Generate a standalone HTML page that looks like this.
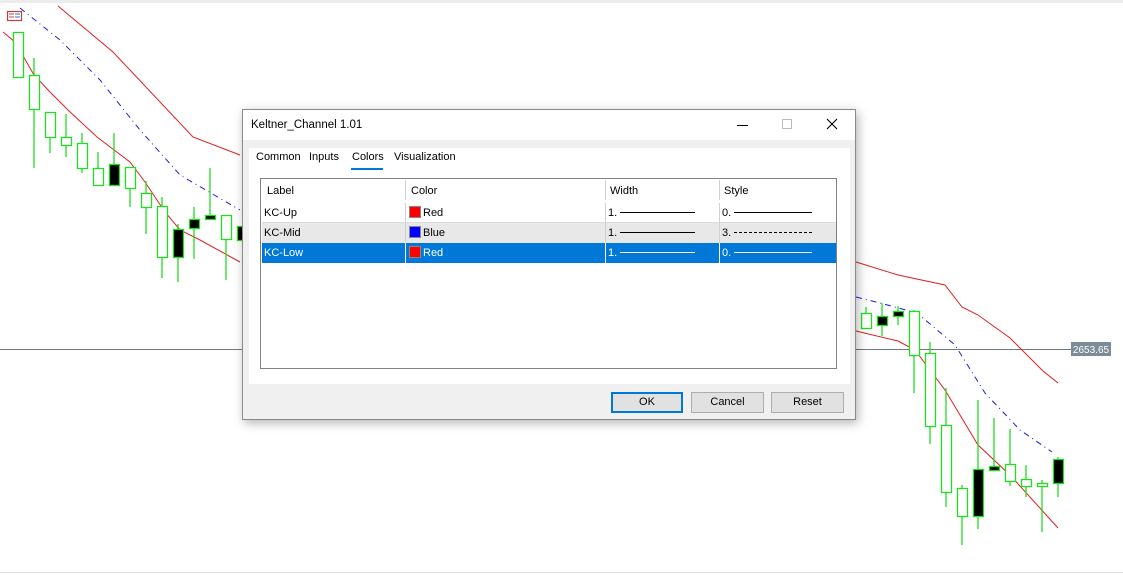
<!DOCTYPE html>
<html><head><meta charset="utf-8"><style>
*{margin:0;padding:0;box-sizing:border-box}
body{width:1123px;height:575px;background:#fff;position:relative;overflow:hidden;font-family:"Liberation Sans",sans-serif;font-size:11px;color:#000}
.abs{position:absolute}
.dlg{left:242px;top:109px;width:614px;height:311px;background:#f0f0f0;border:1px solid #8a8a8a;box-shadow:2px 3px 10px rgba(0,0,0,.3)}
.title{position:absolute;left:0;top:0;width:612px;height:30px;background:#fff}
.panel{position:absolute;left:6px;top:38px;width:601px;height:236px;background:#fff}
.tbl{position:absolute;left:17px;top:68px;width:577px;height:191px;border:1px solid #828282;background:#fff}
.row{position:absolute;left:1px;width:574px;height:20px}
.c{position:absolute;top:0;height:20px;line-height:20px;border-right:1px solid #d0d0d0}
.btn{position:absolute;top:282px;height:21px;background:#e1e1e1;border:1px solid #adadad;text-align:center;line-height:19px;font-size:11px}
</style></head><body>
<div class="abs" style="left:0;top:0;width:1123px;height:3px;background:#ececec"></div>
<div class="abs" style="left:0;top:572px;width:1123px;height:1px;background:#ddd"></div>
<svg class="abs" style="left:0;top:0" width="1123" height="575">
<rect x="7.5" y="11.5" width="14" height="9" fill="none" stroke="#c04040" stroke-width="1.2"/>
<line x1="9" y1="14" x2="14" y2="14" stroke="#d04040"/><line x1="9" y1="17" x2="14" y2="17" stroke="#d04040"/>
<line x1="15" y1="14" x2="20" y2="14" stroke="#3070c0"/><line x1="15" y1="17" x2="20" y2="17" stroke="#3070c0"/>
<line x1="0" y1="349.5" x2="1071" y2="349.5" stroke="#707880"/>
<rect x="1071" y="342" width="40" height="14" fill="#7d8b98"/>
<text x="1091" y="353" fill="#fff" font-size="10" text-anchor="middle" font-family="Liberation Sans">2653.65</text>
<g fill="none" stroke="#e02020" stroke-width="1">
<polyline points="58,6 113,52 193,137 240,155"/>
<polyline points="856,262 898,275 945,285 962,307 978,315 1010,338 1043,371 1058,383"/>
<polyline points="3,32 15,42 34,75 50,92 68,110 97,137 130,162 145,182 165,212 180,230 200,240 240,262"/>
<polyline points="856,331 898,341 915,350 945,390 978,445 1010,475 1058,528"/>
</g>
<g fill="none" stroke="#2020d0" stroke-width="1" stroke-dasharray="6,4,1,4">
<polyline points="20,8 60,40 100,80 140,130 180,175 240,210"/>
<polyline points="856,297 880,303 917,313 955,345 985,393 1020,430 1052,452"/>
</g>
<g stroke="#22dd22" stroke-width="1.3">
<line x1="34" y1="58" x2="34" y2="168"/><line x1="50" y1="137" x2="50" y2="153"/><line x1="66" y1="114" x2="66" y2="157"/><line x1="82" y1="133" x2="82" y2="173"/><line x1="98" y1="152" x2="98" y2="185"/><line x1="114" y1="133" x2="114" y2="185"/><line x1="130" y1="188" x2="130" y2="207"/><line x1="146" y1="181" x2="146" y2="234"/><line x1="162" y1="197" x2="162" y2="278"/><line x1="178" y1="224" x2="178" y2="282"/><line x1="194" y1="207" x2="194" y2="259"/><line x1="210" y1="168" x2="210" y2="218"/><line x1="226" y1="239" x2="226" y2="280"/>
<line x1="866" y1="307" x2="866" y2="313"/><line x1="882" y1="303" x2="882" y2="336"/><line x1="898" y1="306" x2="898" y2="325"/><line x1="914" y1="310" x2="914" y2="393"/><line x1="930" y1="342" x2="930" y2="444"/><line x1="946" y1="388" x2="946" y2="507"/><line x1="962" y1="485" x2="962" y2="545"/><line x1="978" y1="400" x2="978" y2="529"/><line x1="994" y1="418" x2="994" y2="470"/><line x1="1010" y1="429" x2="1010" y2="486"/><line x1="1026" y1="465" x2="1026" y2="497"/><line x1="1042" y1="480" x2="1042" y2="532"/><line x1="1058" y1="457" x2="1058" y2="497"/>
</g>
<g stroke="#22dd22" stroke-width="1.3" fill="#fff">
<rect x="13.5" y="32.5" width="10" height="45"/><rect x="29.5" y="75.5" width="10" height="34"/><rect x="45.5" y="112.5" width="10" height="25"/><rect x="61.5" y="137.5" width="10" height="8"/><rect x="77.5" y="143.5" width="10" height="25"/><rect x="93.5" y="168.5" width="10" height="17"/><rect x="125.5" y="167.5" width="10" height="21"/><rect x="141.5" y="193.5" width="10" height="14"/><rect x="157.5" y="206.5" width="10" height="51"/><rect x="221.5" y="215.5" width="10" height="24"/>
<rect x="861.5" y="313.5" width="10" height="15"/><rect x="909.5" y="311.5" width="10" height="44"/><rect x="925.5" y="353.5" width="10" height="73"/><rect x="941.5" y="425.5" width="10" height="67"/><rect x="957.5" y="488.5" width="10" height="28"/><rect x="1005.5" y="464.5" width="10" height="17"/><rect x="1021.5" y="479.5" width="10" height="7"/><rect x="1037.5" y="483.5" width="10" height="3"/>
</g>
<g stroke="#22dd22" stroke-width="1.3" fill="#000">
<rect x="109.5" y="164.5" width="10" height="21"/><rect x="173.5" y="229.5" width="10" height="28"/><rect x="189.5" y="219.5" width="10" height="9"/><rect x="205.5" y="215.5" width="10" height="4"/><rect x="237.5" y="226.5" width="10" height="14"/>
<rect x="877.5" y="316.5" width="10" height="9"/><rect x="893.5" y="311.5" width="10" height="5"/><rect x="973.5" y="469.5" width="10" height="47"/><rect x="989.5" y="466.5" width="10" height="4"/><rect x="1053.5" y="459.5" width="10" height="24"/>
</g>
</svg>
<div class="abs dlg">
 <div class="title">
  <div class="abs" style="left:8px;top:9px;font-size:11.5px">Keltner_Channel 1.01</div>
  <div class="abs" style="left:494px;top:15px;width:11px;height:1px;background:#000"></div>
  <div class="abs" style="left:539px;top:9px;width:10px;height:10px;border:1px solid #bbb"></div>
  <svg class="abs" style="left:583px;top:8px" width="12" height="12"><path d="M1 1L11 11M11 1L1 11" stroke="#000" stroke-width="1.1"/></svg>
 </div>
 <div class="panel"></div>
 <div class="abs" style="left:13px;top:41px">Common</div>
 <div class="abs" style="left:66px;top:41px">Inputs</div>
 <div class="abs" style="left:109px;top:41px">Colors</div>
 <div class="abs" style="left:108px;top:58px;width:32px;height:2px;background:#0078d7"></div>
 <div class="abs" style="left:151px;top:41px">Visualization</div>
 <div class="tbl">
  <div class="row" style="top:1px;height:22px">
   <div class="c" style="left:0;width:144px;padding-left:5px;line-height:22px">Label</div>
   <div class="c" style="left:144px;width:200px;padding-left:5px;line-height:22px">Color</div>
   <div class="c" style="left:344px;width:114px;padding-left:4px;line-height:22px">Width</div>
   <div class="c" style="left:458px;width:116px;padding-left:4px;line-height:22px;border:none">Style</div>
  </div>
  <div class="row" style="top:24px;border-bottom:1px solid #ddd">
   <div class="c" style="left:0;width:144px;padding-left:2px">KC-Up</div>
   <div class="c" style="left:144px;width:200px;padding-left:3px"><span style="display:inline-block;width:12px;height:12px;background:#f00;border:1px solid #888;vertical-align:-2px;margin-right:2px"></span>Red</div>
   <div class="c" style="left:344px;width:114px;padding-left:2px">1. <span style="display:inline-block;width:75px;border-top:1px solid #000;vertical-align:3px"></span></div>
   <div class="c" style="left:458px;width:116px;padding-left:2px;border:none">0. <span style="display:inline-block;width:78px;border-top:1px solid #000;vertical-align:3px"></span></div>
  </div>
  <div class="row" style="top:44px;background:#e8e8e8">
   <div class="c" style="left:0;width:144px;padding-left:2px">KC-Mid</div>
   <div class="c" style="left:144px;width:200px;padding-left:3px"><span style="display:inline-block;width:12px;height:12px;background:#00f;border:1px solid #888;vertical-align:-2px;margin-right:2px"></span>Blue</div>
   <div class="c" style="left:344px;width:114px;padding-left:2px">1. <span style="display:inline-block;width:75px;border-top:1px solid #000;vertical-align:3px"></span></div>
   <div class="c" style="left:458px;width:116px;padding-left:2px;border:none">3. <span style="display:inline-block;width:78px;border-top:1px dashed #000;vertical-align:3px"></span></div>
  </div>
  <div class="row" style="top:64px;background:#0078d7;color:#fff">
   <div class="c" style="left:0;width:144px;padding-left:2px;border-color:#fff">KC-Low</div>
   <div class="c" style="left:144px;width:200px;padding-left:3px;border-color:#fff"><span style="display:inline-block;width:12px;height:12px;background:#f00;border:1px solid #888;vertical-align:-2px;margin-right:2px"></span>Red</div>
   <div class="c" style="left:344px;width:114px;padding-left:2px;border-color:#fff">1. <span style="display:inline-block;width:75px;border-top:1px solid #fff;vertical-align:3px"></span></div>
   <div class="c" style="left:458px;width:116px;padding-left:2px;border:none">0. <span style="display:inline-block;width:78px;border-top:1px solid #fff;vertical-align:3px"></span></div>
  </div>
 </div>
 <div class="btn" style="left:368px;width:72px;border:2px solid #0078d7;line-height:17px">OK</div>
 <div class="btn" style="left:448px;width:73px">Cancel</div>
 <div class="btn" style="left:528px;width:73px">Reset</div>
</div>
</body></html>
